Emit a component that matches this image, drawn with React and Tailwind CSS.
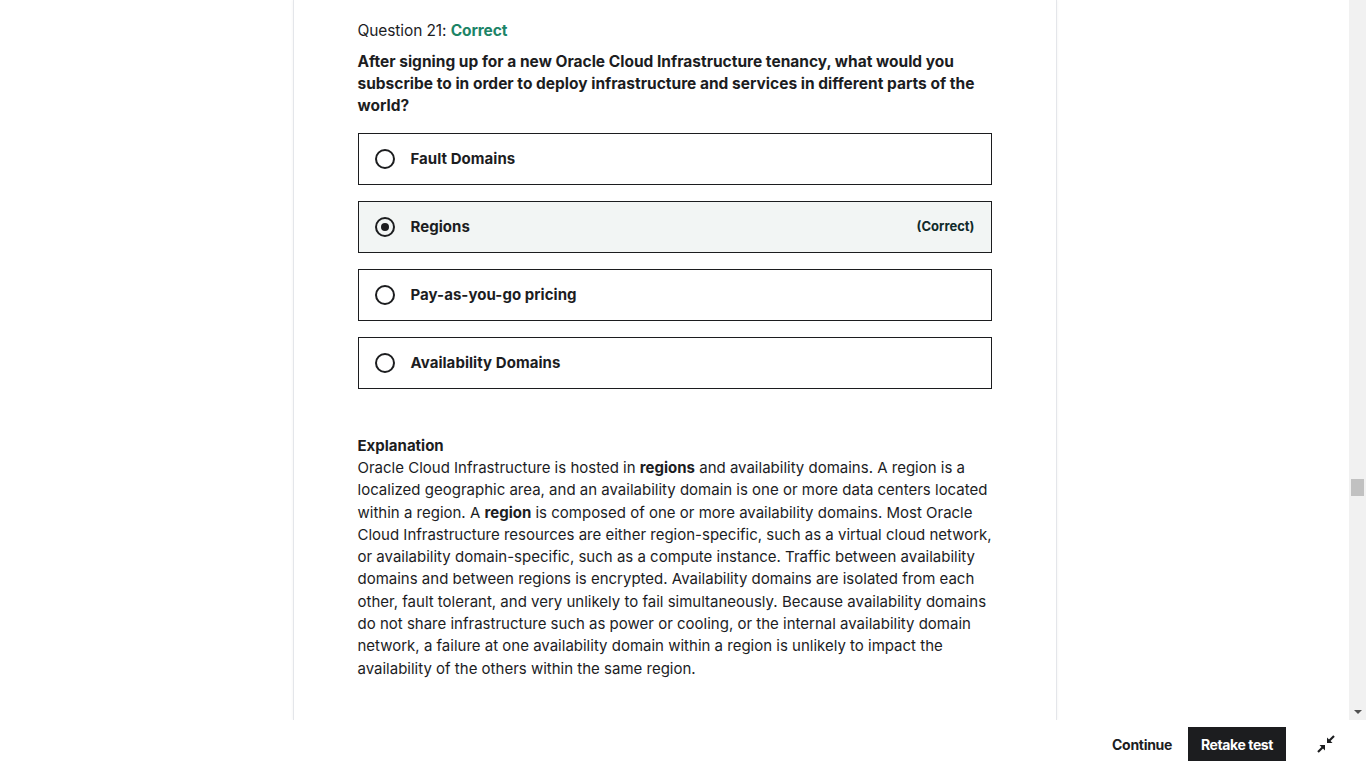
import React from 'react';

const options = [
  { label: 'Fault Domains' },
  { label: 'Regions', selected: true, correct: true },
  { label: 'Pay-as-you-go pricing' },
  { label: 'Availability Domains' },
];

const Radio = ({ checked }) => (
  <span className="w-5 h-5 rounded-full border-2 border-[#1c1d1f] flex items-center justify-center shrink-0">
    {checked && <span className="w-2 h-2 rounded-full bg-[#1c1d1f]" />}
  </span>
);

const CompressIcon = () => (
  <svg width="20" height="20" viewBox="0 0 20 20" fill="none">
    <polygon points="11,9 11,3.5 16.5,9" fill="#1c1d1f" />
    <line x1="13" y1="7" x2="18" y2="2" stroke="#1c1d1f" strokeWidth="2.2" />
    <polygon points="9,11 9,16.5 3.5,11" fill="#1c1d1f" />
    <line x1="7" y1="13" x2="2" y2="18" stroke="#1c1d1f" strokeWidth="2.2" />
  </svg>
);

const App = () => {
  return (
    <div className="h-screen w-full flex flex-col bg-white text-[#1c1d1f]" style={{ fontFamily: 'Inter, "Noto Sans", sans-serif' }}>
      <div className="flex flex-1 min-h-0">
        <div className="flex-1 overflow-hidden flex justify-center">
          <div className="w-[764px] border-l border-r border-[#e4e6ea] shadow-[0_0_3px_rgba(0,0,0,0.06)] px-16 pt-[19px]">
            <div className="text-[15.5px] leading-6 tracking-[-0.1px]">
              Question 21: <span className="font-bold text-[#1c8467]">Correct</span>
            </div>
            <p className="mt-[8px] font-bold text-[15.5px] leading-[22px] w-[634px]">
              After signing up for a new Oracle Cloud Infrastructure tenancy, what would you subscribe to in order to deploy infrastructure and services in different parts of the world?
            </p>
            <div className="mt-[16px] flex flex-col gap-4 w-[634px]">
              {options.map((o) => (
                <div
                  key={o.label}
                  className={`h-[52px] border border-[#1c1d1f] flex items-center pl-4 pr-4 gap-4 ${o.selected ? 'bg-[#f2f5f4]' : 'bg-white'}`}
                >
                  <Radio checked={o.selected} />
                  <span className="font-bold text-[15px] tracking-[0.05px] flex-1">{o.label}</span>
                  {o.correct && <span className="font-bold text-[13px] text-[#0f2a2a]">(Correct)</span>}
                </div>
              ))}
            </div>
            <div className="mt-[46px] w-[640px]">
              <div className="font-bold text-[15px] leading-[22px]">Explanation</div>
              <p className="text-[15px] leading-[22.3px]">
                Oracle Cloud Infrastructure is hosted in <b>regions</b> and availability domains. A region is a localized geographic area, and an availability domain is one or more data centers located within a region. A <b>region</b> is composed of one or more availability domains. Most Oracle Cloud Infrastructure resources are either region-specific, such as a virtual cloud network, or availability domain-specific, such as a compute instance. Traffic between availability domains and between regions is encrypted. Availability domains are isolated from each other, fault tolerant, and very unlikely to fail simultaneously. Because availability domains do not share infrastructure such as power or cooling, or the internal availability domain network, a failure at one availability domain within a region is unlikely to impact the availability of the others within the same region.
              </p>
            </div>
          </div>
        </div>
        <div className="w-[17px] bg-[#f1f1f1] flex flex-col items-center">
          <div className="h-[17px] w-full" />
          <div className="mt-[462px] w-[13px] h-[17px] bg-[#c1c1c1]" />
          <div className="flex-1" />
          <div className="h-[17px] flex items-center justify-center">
            <span className="w-0 h-0 border-l-[4px] border-r-[4px] border-t-[4px] border-l-transparent border-r-transparent border-t-[#505050]" />
          </div>
        </div>
      </div>
      <div className="h-12 shrink-0 flex items-center justify-end pr-[30px]">
        <span className="font-bold text-[14px] tracking-[-0.3px] mr-4">Continue</span>
        <button className="bg-[#1c1d1f] text-white font-bold text-[14px] tracking-[-0.4px] h-[34px] w-[98px]">Retake test</button>
        <span className="ml-[30px]"><CompressIcon /></span>
      </div>
    </div>
  );
};

export default App;
